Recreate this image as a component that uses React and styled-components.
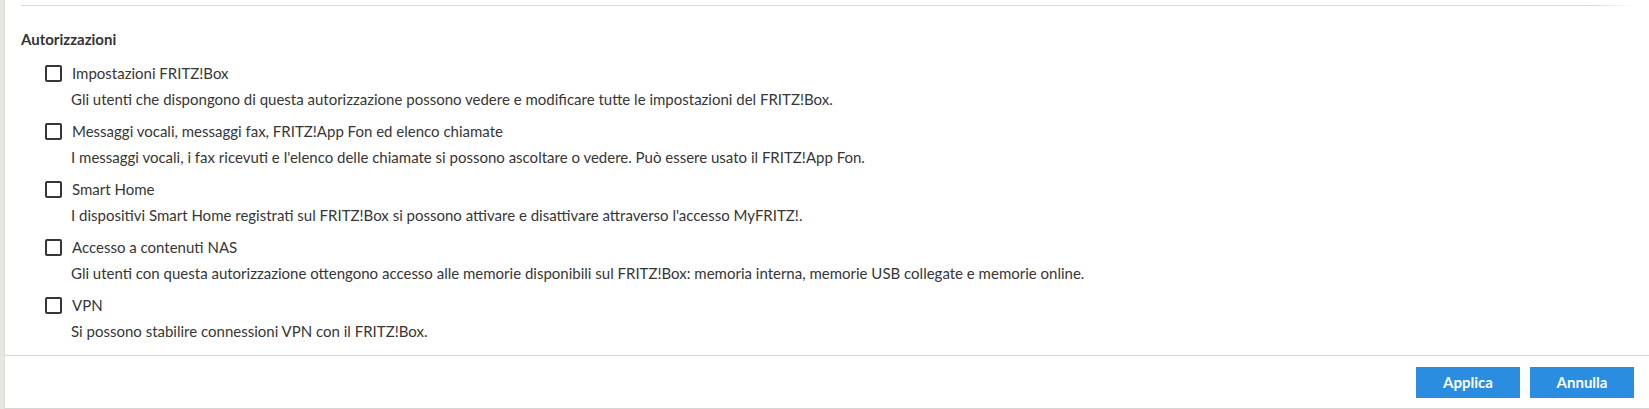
import React from 'react'
import styled, { createGlobalStyle } from 'styled-components'

const permissions = [
  {
    label: 'Impostazioni FRITZ!Box',
    text: 'Gli utenti che dispongono di questa autorizzazione possono vedere e modificare tutte le impostazioni del FRITZ!Box.',
  },
  {
    label: 'Messaggi vocali, messaggi fax, FRITZ!App Fon ed elenco chiamate',
    text: "I messaggi vocali, i fax ricevuti e l'elenco delle chiamate si possono ascoltare o vedere. Può essere usato il FRITZ!App Fon.",
  },
  {
    label: 'Smart Home',
    text: "I dispositivi Smart Home registrati sul FRITZ!Box si possono attivare e disattivare attraverso l'accesso MyFRITZ!.",
  },
  {
    label: 'Accesso a contenuti NAS',
    text: 'Gli utenti con questa autorizzazione ottengono accesso alle memorie disponibili sul FRITZ!Box: memoria interna, memorie USB collegate e memorie online.',
  },
  {
    label: 'VPN',
    text: 'Si possono stabilire connessioni VPN con il FRITZ!Box.',
  },
]

const App = () => (
  <>
    <GlobalStyle />
    <Page>
      <Rail />
      <Main>
        <Content>
          <TopRule />
          <Heading>Autorizzazioni</Heading>
          <List>
            {permissions.map((p) => (
              <Item key={p.label}>
                <Check type="checkbox" />
                <Label>{p.label}</Label>
                <Description>{p.text}</Description>
              </Item>
            ))}
          </List>
        </Content>
        <Footer>
          <Button>Applica</Button>
          <Button>Annulla</Button>
        </Footer>
      </Main>
    </Page>
  </>
)

export default App

// ------- STYLES -------

const GlobalStyle = createGlobalStyle`
  html, body {
    margin: 0;
    padding: 0;
    background: #fff;
  }
  body {
    font-family: Lato, "Liberation Sans", sans-serif;
    color: #363636;
  }
`

const Page = styled.div`
  display: flex;
  width: 1649px;
  height: 409px;
  overflow: hidden;
`

const Rail = styled.div`
  width: 4px;
  flex: none;
  background: #e8e6e1;
  border-right: 1px solid #dedcd7;
`

const Main = styled.div`
  flex: 1;
  display: flex;
  flex-direction: column;
`

const Content = styled.div`
  flex: 1;
  padding: 5px 0 0 16px;
`

const TopRule = styled.div`
  height: 1px;
  margin-right: 12px;
  background: linear-gradient(to right, #d9d9d9 97%, rgba(217, 217, 217, 0));
`

const Heading = styled.h3`
  margin: 23px 0 0;
  font-size: 15px;
  font-weight: 700;
  line-height: 20px;
  color: #333;
`

const List = styled.div`
  display: flex;
  flex-direction: column;
  gap: 12px;
  margin-top: 14px;
  padding-left: 24px;
`

const Item = styled.label`
  display: grid;
  grid-template-columns: 17px 1fr;
  column-gap: 10px;
  row-gap: 6px;
  align-items: center;
  font-size: 15px;
  line-height: 20px;
`

const Check = styled.input`
  appearance: none;
  margin: 0;
  width: 17px;
  height: 17px;
  box-sizing: border-box;
  border: 2px solid #363636;
  border-radius: 2px;
  background: #fff;
`

const Label = styled.span`
  color: #363636;
`

const Description = styled.span`
  grid-column: 2;
  margin-left: -1px;
  color: #363636;
`

const Footer = styled.div`
  height: 52px;
  flex: none;
  display: flex;
  align-items: center;
  justify-content: flex-end;
  gap: 10px;
  padding-right: 15px;
  border-top: 1px solid #d6d6d6;
  border-bottom: 1px solid #d6d6d6;
`

const Button = styled.button`
  width: 104px;
  height: 31px;
  border: none;
  border-radius: 0;
  background: #2a8ddf;
  color: #fff;
  font-family: Lato, sans-serif;
  font-size: 15px;
  font-weight: 700;
  cursor: pointer;
`
